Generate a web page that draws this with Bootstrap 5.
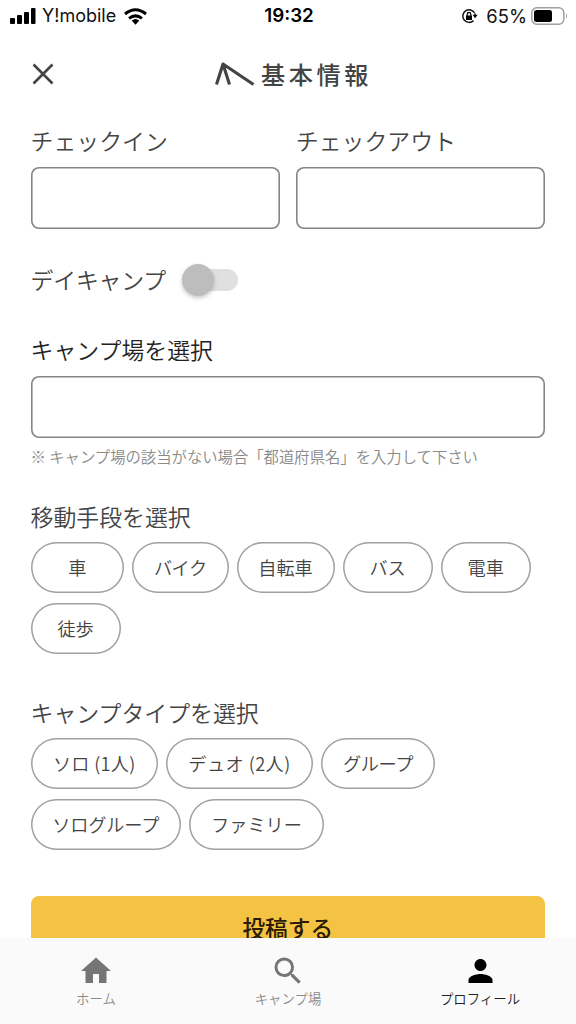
<!DOCTYPE html>
<html lang="ja">
<head>
<meta charset="utf-8">
<meta name="viewport" content="width=device-width, initial-scale=1">
<title>基本情報</title>
<link href="https://cdn.jsdelivr.net/npm/bootstrap@5.3.0/dist/css/bootstrap.min.css" rel="stylesheet">
<style>
body{font-family:"Noto Sans CJK JP",sans-serif;font-weight:350;color:#444;background:#fff}
.app-screen{height:1024px;overflow:hidden}
.status-row{height:32px;font-family:Inter,"Liberation Sans",sans-serif;font-size:18px;color:#111;line-height:32px;padding:0 8px 0 10px}
.status-side{width:200px}
.carrier{letter-spacing:0;font-weight:400;margin-left:6px}
.carrier+svg{margin-left:8px}
.clock{font-weight:600;color:#000;font-size:18.8px}
.battery-text{font-weight:400;font-size:18.4px}
.title-row{height:84px;padding:0 31px}
.close-mark{margin-left:1px}
.title-mark{margin-left:4px;margin-right:6px}
.page-title{font-size:24.2px;font-weight:500;letter-spacing:3.5px;line-height:32px;color:#444}
.form-area{height:822px;overflow:hidden;padding:7px 31px 0 30.5px}
.field-title{display:block;font-size:22.9px;line-height:34px;white-space:nowrap}
.field-title.strong-tone{color:#222}
.form-control.field-box{height:62px;border:0;box-shadow:inset 0 0 0 1.6px #858585;border-radius:8px;background:#fff}
.pair-row .field-box{margin-top:10px}
.day-row{height:34px;margin-top:33px}
.day-row .field-title{letter-spacing:-.2px}
.toggle-track{width:46px;height:22px;border-radius:11px;background:#e0e0e0;margin:2px 0 0 26px}
.toggle-knob{left:-10px;top:-5px;width:32px;height:32px;background:#bdbdbd;box-shadow:0 2px 4px rgba(0,0,0,.22)}
.site-part{margin-top:36px}.site-part .field-box{margin-top:10px}
.note-line{font-size:15.35px;line-height:22px;color:#8a8a8a;white-space:nowrap;margin-top:7px}
.move-part{margin-top:32px}
.chip-list{gap:10px 8px;margin-top:9px}
.type-part{margin-top:41px}
.btn.chip{height:51px;border:0;box-shadow:inset 0 0 0 1.5px #a0a0a0;border-radius:26px;font-size:18.2px;font-weight:350;line-height:27px;padding:0 0 1px;color:#444;white-space:nowrap;width:90.2px}
.w-car.chip{width:93.5px}.w-bike.chip{width:96.5px;letter-spacing:-.5px}.w-cycle.chip{width:98px}
.w-solo.chip{width:127.5px;letter-spacing:.3px}.w-duo.chip{width:147px;letter-spacing:.45px}.w-group.chip{width:114px;letter-spacing:-.4px}.w-sgroup.chip{width:150.5px;letter-spacing:-.15px}.w-family.chip{width:135px}
.btn.submit-btn{height:66px;background:#f4c344;color:#2c1c02;border:0;border-radius:8px;font-size:22.7px;font-weight:500;line-height:34px;padding:0 0 2px;margin-top:46px}
.tab-strip{height:86px;background:#fafafa}
.tab-item{font-size:13.4px;line-height:20px;color:#8a8a8a;text-decoration:none;padding-top:15px;width:192px}
.tab-item svg{fill:#757575;display:block;margin-bottom:-1px}
.tab-item.is-on{color:#222}.tab-item.is-on svg{fill:#000}
</style>
</head>
<body>
<main class="app-screen d-flex flex-column">
<div class="status-row d-flex justify-content-between">
<div class="status-side d-flex align-items-center">
<svg width="26" height="16" viewBox="0 0 26 16"><rect y="10" width="5" height="6" rx="1"/><rect x="7" y="7" width="5" height="9" rx="1"/><rect x="14" y="4" width="5" height="12" rx="1"/><rect x="21" width="4.500" height="16" rx="1"/></svg>
<span class="carrier">Y!mobile</span>
<svg width="23" height="17" viewBox="0 0 23 17" fill="none" stroke="#000" stroke-width="3"><path d="M1 6Q11.500-2.500 22 6M5 10.400q6.500-5 13 0"/><path d="M7.700 12.500Q11.500 9.500 15.300 12.500L11.500 16.800Z" fill="#000" stroke="none"/></svg>
</div>
<span class="clock">19:32</span>
<div class="status-side d-flex align-items-center justify-content-end">
<svg class="me-2" width="17" height="17" viewBox="0 0 17 17"><path d="M13.600 5A6.300 6.300 0 1 0 12.500 12.600" fill="none" stroke="#111" stroke-width="1.500"/><path d="M11.600 6.800h5l-2.500 3.500zM5 7.500h6V12H5z"/><path d="M14 5.500v2" stroke="#111" stroke-width="1.500"/><path d="M6.200 8V6.300a1.800 1.800 0 0 1 3.600 0V8" fill="none" stroke="#111" stroke-width="1.300"/></svg>
<span class="battery-text">65%</span>
<svg class="ms-1" width="37" height="18" viewBox="0 0 37 18"><rect x=".8" y=".8" width="32" height="16.400" rx="5" fill="none" stroke="#a0a0a0" stroke-width="1.500"/><rect x="3" y="3" width="18" height="12" rx="2.500"/><path d="M35 6q2 3 0 6z" fill="#a0a0a0"/></svg>
</div>
</div>
<header class="title-row d-flex align-items-center">
<svg class="close-mark" width="22" height="22" viewBox="0 0 22 22"><path d="M1.500 1.500L20.500 20.500M20.500 1.500L1.500 20.500" stroke="#444" stroke-width="2.600"/></svg>
<div class="flex-fill d-flex align-items-center justify-content-center pe-3">
<svg class="title-mark" width="40" height="24" viewBox="0 0 40 24" fill="none" stroke="#444" stroke-width="3.100"><path d="M1.500 22.500L8 2L14.500 22.500M8 2L38.500 22.500" stroke-linejoin="round"/></svg>
<h1 class="page-title mb-0">基本情報</h1>
</div>
</header>
<form class="form-area">
<div class="pair-row d-flex gap-3">
<div class="flex-fill"><label class="field-title" for="checkin">チェックイン</label><input id="checkin" class="form-control field-box" type="text"></div>
<div class="flex-fill"><label class="field-title" for="checkout">チェックアウト</label><input id="checkout" class="form-control field-box" type="text"></div>
</div>
<div class="day-row d-flex align-items-center"><span class="field-title">デイキャンプ</span><span class="toggle-track position-relative"><span class="toggle-knob position-absolute rounded-circle"></span></span></div>
<section class="site-part"><label class="field-title strong-tone" for="site">キャンプ場を選択</label><input id="site" class="form-control field-box" type="text"><p class="note-line mb-0">※ キャンプ場の該当がない場合「都道府県名」を入力して下さい</p></section>
<section class="move-part"><div class="field-title">移動手段を選択</div>
<div class="chip-list d-flex flex-wrap"><button type="button" class="btn chip w-car">車</button><button type="button" class="btn chip w-bike">バイク</button><button type="button" class="btn chip w-cycle">自転車</button><button type="button" class="btn chip">バス</button><button type="button" class="btn chip">電車</button><button type="button" class="btn chip">徒歩</button></div></section>
<section class="type-part"><div class="field-title">キャンプタイプを選択</div>
<div class="chip-list d-flex flex-wrap"><button type="button" class="btn chip w-solo">ソロ (1人)</button><button type="button" class="btn chip w-duo">デュオ (2人)</button><button type="button" class="btn chip w-group">グループ</button><button type="button" class="btn chip w-sgroup">ソログループ</button><button type="button" class="btn chip w-family">ファミリー</button></div></section>
<button type="button" class="btn submit-btn w-100">投稿する</button>
</form>
<nav class="tab-strip d-flex">
<a class="tab-item d-flex flex-column align-items-center" href="#"><svg width="36" height="36" viewBox="0 0 24 24"><path d="M10 20v-6h4v6h5v-8h3L12 3 2 12h3v8z"/></svg>ホーム</a>
<a class="tab-item d-flex flex-column align-items-center" href="#"><svg width="36" height="36" viewBox="0 0 24 24"><path d="M15.500 14h-.79l-.28-.27A6.471 6.471 0 0 0 16 9.500 6.500 6.500 0 1 0 9.500 16c1.610 0 3.090-.59 4.230-1.570l.27.28v.79l5 4.990L20.490 19zm-6 0C7.010 14 5 11.990 5 9.500S7.010 5 9.500 5 14 7.010 14 9.500 11.990 14 9.500 14z"/></svg>キャンプ場</a>
<a class="tab-item is-on d-flex flex-column align-items-center" href="#"><svg width="37" height="36" viewBox="0 0 24 24"><path d="M12 12c2.210 0 4-1.790 4-4s-1.790-4-4-4-4 1.790-4 4 1.790 4 4 4zm0 2c-2.670 0-8 1.340-8 4v2h16v-2c0-2.660-5.330-4-8-4z"/></svg>プロフィール</a>
</nav>
</main>
<script src="https://cdn.jsdelivr.net/npm/bootstrap@5.3.0/dist/js/bootstrap.bundle.min.js"></script>
</body>
</html>
